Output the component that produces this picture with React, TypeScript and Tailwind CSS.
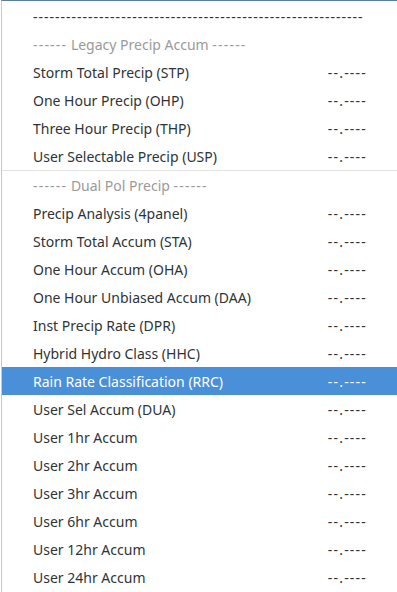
import React from 'react';

type Item =
  | { kind: 'item'; label: string; value?: string; active?: boolean }
  | { kind: 'head'; label: string }
  | { kind: 'sep' };

const V = '--.----';

const items: Item[] = [
  { kind: 'item', label: '-'.repeat(60) },
  { kind: 'head', label: 'Legacy Precip Accum' },
  { kind: 'item', label: 'Storm Total Precip (STP)', value: V },
  { kind: 'item', label: 'One Hour Precip (OHP)', value: V },
  { kind: 'item', label: 'Three Hour Precip (THP)', value: V },
  { kind: 'item', label: 'User Selectable Precip (USP)', value: V },
  { kind: 'sep' },
  { kind: 'head', label: 'Dual Pol Precip' },
  { kind: 'item', label: 'Precip Analysis (4panel)', value: V },
  { kind: 'item', label: 'Storm Total Accum (STA)', value: V },
  { kind: 'item', label: 'One Hour Accum (OHA)', value: V },
  { kind: 'item', label: 'One Hour Unbiased Accum (DAA)', value: V },
  { kind: 'item', label: 'Inst Precip Rate (DPR)', value: V },
  { kind: 'item', label: 'Hybrid Hydro Class (HHC)', value: V },
  { kind: 'item', label: 'Rain Rate Classification (RRC)', value: V, active: true },
  { kind: 'item', label: 'User Sel Accum (DUA)', value: V },
  { kind: 'item', label: 'User 1hr Accum', value: V },
  { kind: 'item', label: 'User 2hr Accum', value: V },
  { kind: 'item', label: 'User 3hr Accum', value: V },
  { kind: 'item', label: 'User 6hr Accum', value: V },
  { kind: 'item', label: 'User 12hr Accum', value: V },
  { kind: 'item', label: 'User 24hr Accum', value: V },
];

export default function App() {
  return (
    <div className="h-[592px] w-[397px] overflow-hidden bg-white pl-px font-['Noto_Sans',sans-serif] text-[14px]">
      <div className="h-full border-l border-l-[#c9c9c9] border-t border-t-[#5d7f9e] pt-px">
        {items.map((it, i) => {
          if (it.kind === 'sep') return <div key={i} className="h-px bg-[#e3e3e3]" />;
          if (it.kind === 'head')
            return (
              <div key={i} className="flex h-[28px] items-center whitespace-pre pl-[31px] text-[#9a9a9a]">
                <span className="tracking-[1.2px]">------</span>
                <span> {it.label} </span>
                <span className="tracking-[1.2px]">------</span>
              </div>
            );
          return (
            <div
              key={i}
              className={`flex h-[28px] items-center justify-between pl-[31px] pr-[30px] ${
                it.active ? 'bg-[#4a90d9] text-white' : 'text-[#2e3436]'
              }`}
            >
              <span className={`whitespace-nowrap ${i === 0 ? 'tracking-[1px]' : ''}`}>{it.label}</span>
              {it.value && <span className="tracking-[1.2px]">{it.value}</span>}
            </div>
          );
        })}
      </div>
    </div>
  );
}
